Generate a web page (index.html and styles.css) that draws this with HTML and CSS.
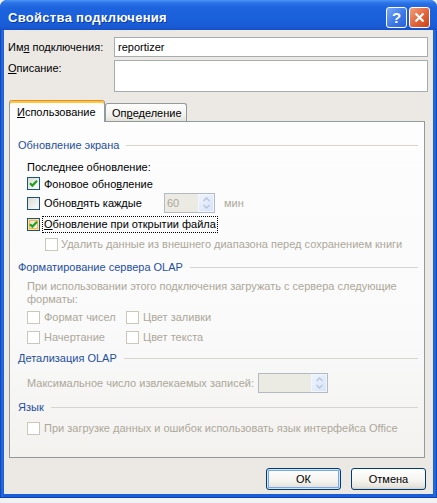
FILE: index.html
```html
<!DOCTYPE html>
<html>
<head>
  <title>Свойства подключения</title>
  <link rel="stylesheet" href="styles.css">
</head>
<body>
  <div class="window">
    <div class="titlebar">
      <span class="title">Свойства подключения</span>
      <div class="title-buttons">
        <span class="tbtn help">?</span>
        <span class="tbtn close">
          <svg width="13" height="13" viewBox="0 0 13 13">
            <path d="M2.5 2.5 L10.5 10.5 M10.5 2.5 L2.5 10.5" stroke="#fff" stroke-width="2.2" fill="none"/>
          </svg>
        </span>
      </div>
    </div>

    <div class="client">
      <div class="form">
        <label class="lbl">Им<u>я</u> подключения:</label>
        <input class="field" type="text" value="reportizer">
        <label class="lbl top"><u>О</u>писание:</label>
        <textarea class="field area"></textarea>
      </div>

      <div class="tabs">
        <div class="tab active"><u>И</u>спользование</div>
        <div class="tab">Оп<u>р</u>еделение</div>
      </div>

      <div class="panel">
        <div class="group g1"><span>Обновление экрана</span></div>
        <div class="line indent last">Последнее обновление:</div>

        <div class="cbrow r1 indent">
          <span class="cb checked">
            <svg width="11" height="11" viewBox="0 0 11 11"><path d="M2 5.2 L4.4 7.6 L9 2.8" stroke="#21a121" stroke-width="2.2" fill="none"/></svg>
          </span>
          <span>Фоновое обно<u>в</u>ление</span>
        </div>

        <div class="cbrow r2 indent">
          <span class="cb"></span>
          <span class="every">Обнов<u>л</u>ять каждые</span>
          <div class="spin small">
            <span class="spin-text">60</span>
            <span class="spin-btn">
              <svg width="9" height="14" viewBox="0 0 9 14"><path d="M1.5 5 L4.5 2 L7.5 5 M1.5 9 L4.5 12 L7.5 9" stroke="#b9c4d6" stroke-width="1.3" fill="none"/></svg>
            </span>
          </div>
          <span class="unit">мин</span>
        </div>

        <div class="cbrow r3 indent">
          <span class="cb checked hover">
            <svg width="11" height="11" viewBox="0 0 11 11"><path d="M2 5.2 L4.4 7.6 L9 2.8" stroke="#21a121" stroke-width="2.2" fill="none"/></svg>
          </span>
          <span class="focus"><u>О</u>бновление при открытии файла</span>
        </div>

        <div class="cbrow r4 sub disabled">
          <span class="cb off"></span>
          <span>Удалить данные из внешнего диапазона перед сохранением книги</span>
        </div>

        <div class="group g2"><span>Форматирование сервера OLAP</span></div>
        <div class="note indent disabled">При использовании этого подключения загружать с сервера следующие<br>форматы:</div>

        <div class="olap indent disabled">
          <div class="cbrow"><span class="cb off"></span><span>Формат чисел</span></div>
          <div class="cbrow"><span class="cb off"></span><span>Цвет заливки</span></div>
          <div class="cbrow"><span class="cb off"></span><span>Начертание</span></div>
          <div class="cbrow"><span class="cb off"></span><span>Цвет текста</span></div>
        </div>

        <div class="group g3"><span>Детализация OLAP</span></div>
        <div class="maxrow indent disabled">
          <span class="maxlbl">Максимальное число извлекаемых записей:</span>
          <div class="spin wide">
            <span class="spin-text"></span>
            <span class="spin-btn">
              <svg width="9" height="14" viewBox="0 0 9 14"><path d="M1.5 5 L4.5 2 L7.5 5 M1.5 9 L4.5 12 L7.5 9" stroke="#b9c4d6" stroke-width="1.3" fill="none"/></svg>
            </span>
          </div>
        </div>

        <div class="group g4"><span>Язык</span></div>
        <div class="cbrow lang indent disabled">
          <span class="cb off"></span>
          <span>При загрузке данных и ошибок использовать язык интерфейса Office</span>
        </div>
      </div>

      <div class="buttons">
        <button class="btn default">ОК</button>
        <button class="btn">Отмена</button>
      </div>
    </div>
  </div>
</body>
</html>
```

FILE: styles.css
```css
* {
  box-sizing: border-box;
}
body {
  margin: 0;
  background: #f2f2f2;
  font-family: "Liberation Sans", Arial, sans-serif;
  font-size: 11px;
  color: #000;
  white-space: nowrap;
}
u {
  text-decoration: underline;
  text-underline-offset: 1px;
}

/* window frame */
.window {
  width: 437px;
  height: 498px;
  display: flex;
  flex-direction: column;
  background: linear-gradient(90deg, #0b3fb4 0, #2a6ee0 2px, #1a5dd8 4px, #1a5dd8 433px, #2a6ee0 435px, #0b3fb4 437px);
  border-radius: 7px 7px 0 0;
  border-bottom: 1px solid #0b3fb4;
}
.titlebar {
  height: 30px;
  display: flex;
  align-items: center;
  justify-content: space-between;
  padding: 4px 7px 0 8px;
  border-radius: 7px 7px 0 0;
  background: linear-gradient(#4a93f5 0, #2b72e6 3px, #1d63dd 8px, #1a5fdb 20px, #1a5ad4 27px, #1550c6 30px);
}
.title {
  color: #fff;
  font-weight: bold;
  font-size: 13px;
  letter-spacing: 0.3px;
  text-shadow: 1px 1px 0 #0b3a9c;
}
.title-buttons {
  display: flex;
  gap: 2px;
}
.tbtn {
  width: 21px;
  height: 21px;
  border: 1px solid #fff;
  border-radius: 3px;
  display: flex;
  align-items: center;
  justify-content: center;
}
.help {
  background: linear-gradient(135deg, #7aa8f6, #3a75e6 60%, #2a62d6);
  color: #fff;
  font-weight: bold;
  font-size: 15px;
}
.close {
  background: linear-gradient(135deg, #f0a07c, #e2633a 55%, #cc4518);
}

.client {
  flex: 1;
  margin: 0 4px 3px;
  background: #ece9e5;
  padding: 7px 5px 0 4px;
  display: flex;
  flex-direction: column;
}

/* name / description */
.form {
  display: grid;
  grid-template-columns: 106px 1fr;
  row-gap: 3px;
  align-items: center;
}
.lbl.top {
  align-self: start;
  padding-top: 2px;
}
.field {
  height: 20px;
  border: 1px solid #a5acb2;
  background: #fff;
  font-family: "Liberation Sans", Arial, sans-serif;
  font-size: 11px;
  padding: 0 3px;
  margin: 0;
  outline: none;
}
.area {
  height: 32px;
  resize: none;
}

/* tabs */
.tabs {
  display: flex;
  align-items: flex-end;
  height: 20px;
  margin: 9px 0 0 1px;
}
.tab {
  height: 18px;
  padding: 3px 0 0 6px;
  width: 82px;
  border: 1px solid #919b9c;
  border-bottom: none;
  border-radius: 3px 3px 0 0;
  background: linear-gradient(#fefefe, #f0efea 70%, #e3e1da);
}
.tab.active {
  position: relative;
  z-index: 1;
  width: 96px;
  height: 22px;
  margin-bottom: -1px;
  padding: 5px 0 0 7px;
  border-top: 1px solid #e68b2c;
  background: #fdfdfe;
  box-shadow: inset 0 2px 0 #ffc83c;
}

.panel {
  height: 337px;
  margin: 0 3px 0 1px;
  border: 1px solid #919b9c;
  background: linear-gradient(#fdfdfe, #fafafb 60%, #f3f2ef);
  padding: 0 6px 0 8px;
}
.group {
  display: flex;
  align-items: center;
  gap: 7px;
  height: 14px;
  color: #1e4f9f;
}
.group::after {
  content: "";
  flex: 1;
  height: 1px;
  background: #d6d5d0;
}
.g1 { margin-top: 16px; }
.g2 { margin-top: 7px; }
.g3 { margin-top: 4px; }
.g4 { margin-top: 7px; }

.indent {
  margin-left: 9px;
}
.sub {
  margin-left: 27px;
}
.line {
  height: 14px;
  line-height: 14px;
}
.last {
  margin-top: 8px;
}
.disabled {
  color: #aca899;
}

/* checkboxes */
.cbrow {
  display: flex;
  align-items: center;
  gap: 4px;
}
.r1 { height: 19px; }
.r2 { height: 20px; }
.r3 { height: 22px; }
.r4 { height: 18px; gap: 3px; }
.cb {
  width: 13px;
  height: 13px;
  flex: none;
  border: 1px solid #1c5180;
  background: linear-gradient(135deg, #dcdcd7, #fbfbf9);
  display: flex;
  align-items: center;
  justify-content: center;
}
.cb.hover {
  box-shadow: inset 0 0 0 1px #fde39a, inset 0 0 0 2px #f6b547;
}
.cb.off {
  border-color: #cac8bb;
  background: #fff;
}
.every {
  width: 116px;
  flex: none;
}
.unit {
  margin-left: 5px;
  color: #aca899;
}
.focus {
  margin-left: -2px;
  padding: 1px 1px 2px 1px;
  border: 1px dotted #000;
}

/* spinners */
.spin {
  display: flex;
  height: 20px;
  border: 1px solid #b3bac4;
  background: #ebebe4;
}
.spin.small {
  width: 51px;
}
.spin.wide {
  width: 70px;
}
.spin-text {
  flex: 1;
  padding: 3px 0 0 2px;
  color: #aca899;
}
.spin-btn {
  width: 16px;
  display: flex;
  align-items: center;
  justify-content: center;
  border: 1px solid #f2f6fe;
  background: linear-gradient(135deg, #eef3fd, #d8e4fb);
}

.note {
  margin-top: 6px;
  line-height: 13px;
}
.olap {
  display: grid;
  grid-template-columns: 99px auto;
  grid-auto-rows: 20px;
  margin-top: 1px;
}
.maxrow {
  display: flex;
  align-items: center;
  height: 20px;
  margin-top: 8px;
}
.maxlbl {
  width: 231px;
  flex: none;
}
.lang {
  height: 18px;
  margin-top: 5px;
}

/* dialog buttons */
.buttons {
  display: flex;
  justify-content: flex-end;
  gap: 10px;
  margin: 10px 2px 0 0;
}
.btn {
  width: 75px;
  height: 22px;
  border: 1px solid #003c74;
  border-radius: 3px;
  background: linear-gradient(#ffffff, #f4f3ee 60%, #e6e3da 90%, #d6d0c5);
  font-family: "Liberation Sans", Arial, sans-serif;
  font-size: 11px;
  color: #000;
  padding: 0;
}
.btn.default {
  box-shadow: inset 0 0 0 1px #cee7ff, inset 0 0 0 2px #7ea4e6;
}
```
